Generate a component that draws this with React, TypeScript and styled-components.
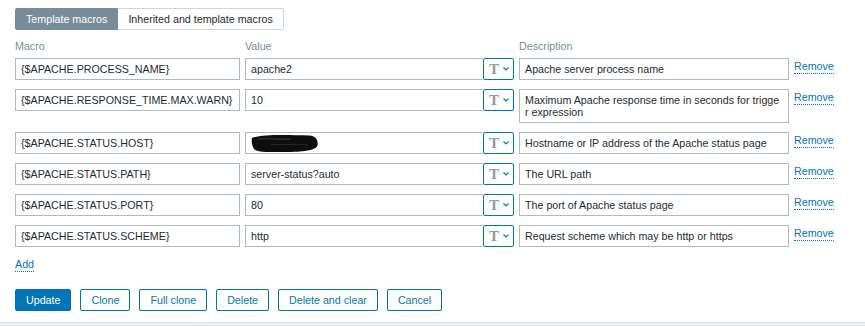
import styled, { createGlobalStyle } from 'styled-components'

interface Macro {
  name: string
  value: string
  description: string[]
  hidden?: boolean
}

const macros: Macro[] = [
  { name: '{$APACHE.PROCESS_NAME}', value: 'apache2', description: ['Apache server process name'] },
  {
    name: '{$APACHE.RESPONSE_TIME.MAX.WARN}',
    value: '10',
    description: ['Maximum Apache response time in seconds for trigge', 'r expression'],
  },
  { name: '{$APACHE.STATUS.HOST}', value: '', hidden: true, description: ['Hostname or IP address of the Apache status page'] },
  { name: '{$APACHE.STATUS.PATH}', value: 'server-status?auto', description: ['The URL path'] },
  { name: '{$APACHE.STATUS.PORT}', value: '80', description: ['The port of Apache status page'] },
  { name: '{$APACHE.STATUS.SCHEME}', value: 'http', description: ['Request scheme which may be http or https'] },
]

const BLUE = '#0275b8'

const GlobalStyle = createGlobalStyle`
  html, body {
    margin: 0;
    padding: 0;
    background: #fff;
  }
  body {
    font-family: "Liberation Sans", Arial, sans-serif;
    font-size: 10.7px;
    color: #1f2c33;
  }
`

const Page = styled.div({
  height: 326,
  display: 'flex',
  flexDirection: 'column',
})

const Content = styled.div({
  flex: 1,
  padding: '8px 15px 0',
})

const BottomStrip = styled.div({
  height: 3,
  background: '#ebeef0',
  borderTop: '1px solid #e3e7ea',
})

const Tabs = styled.div({
  display: 'flex',
})

const Tab = styled.div<{ $active?: boolean }>(({ $active }) => ({
  height: 22,
  boxSizing: 'border-box',
  padding: '0 10px',
  lineHeight: '20px',
  border: `1px solid ${$active ? '#768d99' : '#ccd5d9'}`,
  borderLeftWidth: $active ? 1 : 0,
  background: $active ? '#768d99' : '#fff',
  color: $active ? '#fff' : '#1f2c33',
  borderRadius: $active ? '2px 0 0 2px' : '0 2px 2px 0',
}))

const Grid = styled.div({
  display: 'grid',
  gridTemplateColumns: '225px 269px 270px auto',
  columnGap: 5,
})

const Header = styled(Grid)({
  marginTop: 10,
  marginBottom: 5,
  lineHeight: '13px',
  color: '#768d99',
})

const Rows = styled.div({
  display: 'flex',
  flexDirection: 'column',
  gap: 9,
})

const Row = styled(Grid)({
  alignItems: 'start',
})

const Field = styled.div({
  height: 22,
  boxSizing: 'border-box',
  border: '1px solid #acbbc2',
  padding: '0 5px',
  lineHeight: '20px',
  whiteSpace: 'nowrap',
  overflow: 'hidden',
  display: 'flex',
  alignItems: 'center',
})

const ValueGroup = styled.div({
  display: 'flex',
})

const ValueField = styled(Field)({
  flex: 1,
  borderRight: 'none',
})

const TypeButton = styled.div({
  width: 31,
  height: 22,
  boxSizing: 'border-box',
  border: `1px solid ${BLUE}`,
  borderRadius: 2,
  display: 'flex',
  alignItems: 'center',
  justifyContent: 'center',
  gap: 4,
  paddingLeft: 1,
})

const TypeGlyph = styled.span({
  fontFamily: '"Liberation Serif", "Times New Roman", serif',
  fontWeight: 'bold',
  fontSize: 15,
  lineHeight: '15px',
  color: '#8a9ba5',
})

const Description = styled.div<{ $lines: number }>(({ $lines }) => ({
  height: $lines > 1 ? 34 : 22,
  boxSizing: 'border-box',
  border: '1px solid #acbbc2',
  padding: $lines > 1 ? '4px 5px' : '0 5px',
  lineHeight: $lines > 1 ? '12px' : '20px',
  whiteSpace: 'nowrap',
  overflow: 'hidden',
}))

const Link = styled.span({
  display: 'inline-block',
  color: BLUE,
  lineHeight: '13px',
  borderBottom: `1px dotted ${BLUE}`,
  cursor: 'pointer',
})

const RemoveLink = styled(Link)({
  justifySelf: 'start',
  marginTop: 2,
})

const AddRow = styled.div({
  marginTop: 11,
})

const Buttons = styled.div({
  display: 'flex',
  gap: 9,
  marginTop: 17,
})

const Button = styled.button<{ $primary?: boolean }>(({ $primary }) => ({
  height: 22,
  boxSizing: 'border-box',
  padding: '0 10px',
  border: `1px solid ${BLUE}`,
  borderRadius: 2,
  background: $primary ? BLUE : '#fff',
  color: $primary ? '#fff' : BLUE,
  font: 'inherit',
  lineHeight: '20px',
  cursor: 'pointer',
}))

function Chevron() {
  return (
    <svg width="6" height="4" viewBox="0 0 6 4">
      <path d="M0.5 0.5 L3 3 L5.5 0.5" fill="none" stroke={BLUE} strokeWidth="1.1" />
    </svg>
  )
}

function Scribble() {
  return (
    <svg width="68" height="19" viewBox="0 0 68 19">
      <path
        d="M1 4 C10 0 38 1 58 1.5 C66 2 68 8 66 12.5 C63 17.5 42 18.5 22 18 C9 18 3 17.5 2 13 C0.5 10 0.5 7 1 4 Z"
        fill="#0d0d0d"
      />
      <path d="M8 5 C18 4 30 6 40 5" stroke="#3a3a3a" strokeWidth="1" fill="none" />
      <path d="M20 10 C30 12 44 9 56 11" stroke="#2a2a2a" strokeWidth="1" fill="none" />
    </svg>
  )
}

export default function App() {
  return (
    <Page>
      <GlobalStyle />
      <Content>
        <Tabs>
          <Tab $active>Template macros</Tab>
          <Tab>Inherited and template macros</Tab>
        </Tabs>

        <Header>
          <span>Macro</span>
          <span>Value</span>
          <span>Description</span>
        </Header>

        <Rows>
          {macros.map((m) => (
            <Row key={m.name}>
              <Field>{m.name}</Field>
              <ValueGroup>
                <ValueField>{m.hidden ? <Scribble /> : m.value}</ValueField>
                <TypeButton>
                  <TypeGlyph>T</TypeGlyph>
                  <Chevron />
                </TypeButton>
              </ValueGroup>
              <Description $lines={m.description.length}>
                {m.description.map((line, i) => (
                  <div key={i}>{line}</div>
                ))}
              </Description>
              <RemoveLink>Remove</RemoveLink>
            </Row>
          ))}
        </Rows>

        <AddRow>
          <Link>Add</Link>
        </AddRow>

        <Buttons>
          <Button $primary>Update</Button>
          <Button>Clone</Button>
          <Button>Full clone</Button>
          <Button>Delete</Button>
          <Button>Delete and clear</Button>
          <Button>Cancel</Button>
        </Buttons>
      </Content>
      <BottomStrip />
    </Page>
  )
}
